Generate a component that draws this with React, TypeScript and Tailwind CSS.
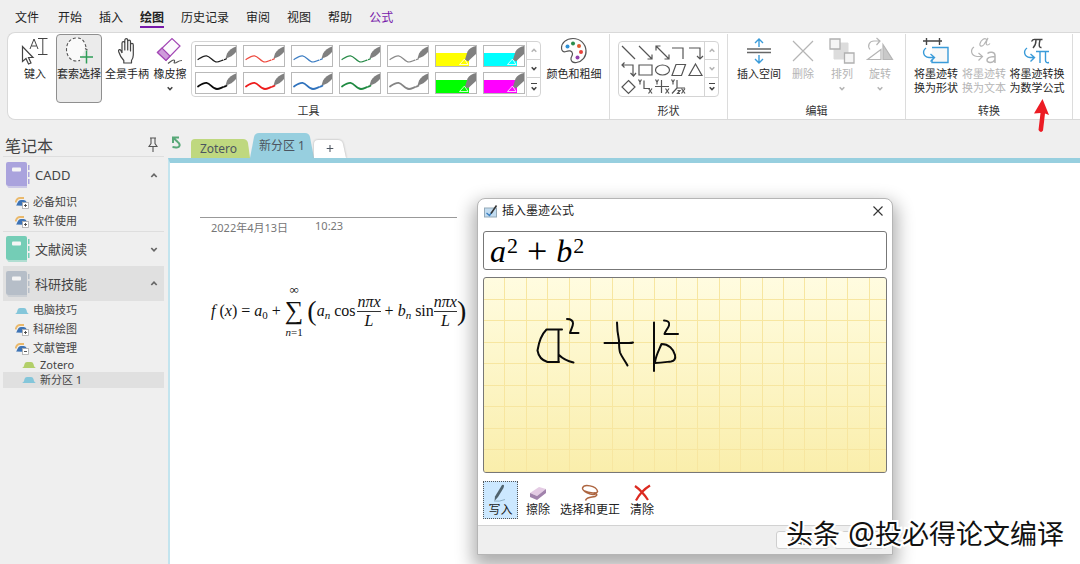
import type { ReactNode } from 'react';
import clsx from 'clsx';

const menuTabs = ['开始', '插入', '绘图', '历史记录', '审阅', '视图', '帮助', '公式'];

const pens = [
  { color: '#1f1f1f', width: 1.2 },
  { color: '#ee4b40', width: 1.2 },
  { color: '#3f7fc4', width: 1.2 },
  { color: '#2a8c4a', width: 1.2 },
  { color: '#8a8a8a', width: 1.2 },
  { color: '#ffff00', marker: true },
  { color: '#00ffff', marker: true },
  { color: '#0a0a0a', width: 1.8 },
  { color: '#ee1c1c', width: 1.8 },
  { color: '#2f72bd', width: 1.8 },
  { color: '#1f8a42', width: 1.8 },
  { color: '#848484', width: 1.8 },
  { color: '#00ff00', marker: true },
  { color: '#ff00ff', marker: true },
];

const shapes: { name: string; art: ReactNode }[] = [
  { name: '直线', art: <path d="M2 2l13 13" /> },
  { name: '箭头', art: <path d="M2 2l13 13M15 10.500v4.500h-4.500" /> },
  { name: '双箭头', art: <path d="M2 2l13 13M15 10.500v4.500h-4.500M2 6.500V2h4.500" /> },
  { name: '肘形', art: <path d="M2 4h11v11" /> },
  { name: '肘形箭头', art: <path d="M2 4h11v11M10 12l3 3 3-3" /> },
  { name: '肘形双箭头', art: <path d="M2 4h11v11M10.500 12l3 3 2.500-3M4.500 1.500L2 4l2.500 2.500" /> },
  { name: '矩形', art: <path d="M2 4h13v10H2z" /> },
  { name: '椭圆', art: <ellipse cx="8.500" cy="9" rx="7" ry="5" /> },
  { name: '平行四边形', art: <path d="M6 3.500h9.500l-4 11H2z" /> },
  { name: '三角形', art: <path d="M8.500 3L15 14.500H2z" /> },
  { name: '菱形', art: <path d="M8.500 2.500L15 9l-6.500 6.500L2 9z" /> },
  { name: '二维象限', art: <Axes d="M7 2.500v8h6" /> },
  { name: '二维坐标', art: <Axes d="M7.500 2v13M1 8.500h14" /> },
  { name: '三维坐标', art: <Axes d="M7 2v8h8M7 10l-5 5.500M7.500 12.500h2.500l-2.500 3H10" /> },
];

function Axes({ d }: { d: string }) {
  return (
    <>
      <path d={d} />
      <path d="M1.500 1.500l1.500 2.500 1.500-2.500M3 4v2.500M11.500 10.500l3.500 5M15 10.500l-3.500 5" />
    </>
  );
}

function Chevron({ up, className = 'text-[#444]', w = 7 }: { up?: boolean; className?: string; w?: number }) {
  return (
    <svg width={w} height="5" viewBox="0 0 7 5" fill="none" stroke="currentColor" strokeWidth="1.700" className={className}>
      <path d={up ? 'M.8 4L3.500 1.200 6.200 4' : 'M.8 1L3.500 3.800 6.200 1'} />
    </svg>
  );
}

function Scroller({ downMuted }: { downMuted?: boolean }) {
  return (
    <div className="grid w-3.5 shrink-0 grid-rows-3 divide-y divide-[#d4d4d4] border-l border-[#d4d4d4]">
      <button aria-label="向上" className="flex items-center justify-center">
        <Chevron up w={6} className="text-[#b5b5b5]" />
      </button>
      <button aria-label="向下" className="flex items-center justify-center">
        <Chevron w={6} className={downMuted ? 'text-[#b5b5b5]' : 'text-[#444]'} />
      </button>
      <button aria-label="更多" className="flex flex-col items-center justify-center gap-0.5">
        <span className="h-px w-1.5 bg-[#444]" />
        <Chevron w={6} />
      </button>
    </div>
  );
}

function PenButton({ color, width, marker }: { color: string; width?: number; marker?: boolean }) {
  return (
    <button aria-label="笔" className="h-[22px] w-[42px] border border-[#b9b9b9] bg-white">
      <svg viewBox="0 0 40 20" className="block h-full w-full">
        {marker ? (
          <>
            <path d="M0 7h33v13H0z" fill={color} />
            <path d="M23.500 18.500l5-5.500 3.500 5.500z" fill={color} stroke="#fff" strokeOpacity=".8" strokeWidth="1" />
            <path d="M29 13.500l2.500-8Q34 1 40 0v8l-5.500 5-2.500 2.500z" fill="#808080" />
          </>
        ) : (
          <>
            <path d="M2 13.500C5 11.500 7.500 9.500 10.500 9.800c4 .4 6 6.200 10.500 6.200 2 0 4-1.200 6-1.900M28.500 13.600l2-.9" fill="none" stroke={color} strokeWidth={width} strokeLinecap="round" />
            <path d="M29.500 12.500l1.500-5Q34 2.500 40 .5V6q-4 5-10.500 6.500z" fill="#808080" />
          </>
        )}
      </svg>
    </button>
  );
}

type ToolProps = {
  icon: ReactNode;
  lines: string[];
  className: string;
  chevron?: boolean;
  disabled?: boolean;
  active?: boolean;
};

function Tool({ icon, lines, className, chevron, disabled, active }: ToolProps) {
  return (
    <button
      disabled={disabled}
      className={clsx(
        'flex flex-col items-center border text-[11px] leading-[14px] whitespace-nowrap',
        active ? 'rounded border-[#8f8f8f] bg-[#ebebeb]' : 'border-transparent',
        disabled ? 'text-[#b5b5b5]' : 'text-[#262626]',
        className
      )}
    >
      <span className="flex h-8 items-center justify-center">{icon}</span>
      {lines.map((line) => (
        <span key={line}>{line}</span>
      ))}
      {chevron && (
        <span className="flex h-3.5 items-center">
          <Chevron w={6} className={disabled ? 'text-[#b5b5b5]' : 'text-[#444]'} />
        </span>
      )}
    </button>
  );
}

function Group({ label, className, children }: { label: string; className: string; children: ReactNode }) {
  return (
    <section className="flex shrink-0 flex-col pt-px">
      <div className={clsx('flex h-[69px] border-r border-[#dcdcdc]', className)}>{children}</div>
      <h2 className="border-r border-[#dcdcdc] text-center text-[11px] leading-4 text-[#333]">{label}</h2>
    </section>
  );
}

const stroke = { fill: 'none', stroke: '#444', strokeWidth: 1.2 };

function TypeIcon() {
  return (
    <svg width="28" height="28" viewBox="0 0 28 28" {...stroke}>
      <path d="M1.500 9.500v15l3.500-3 2.500 5.500 2.500-1-2.500-5.500h4.500z" fill="#fff" />
      <path d="M9 12l4-10 4 10M10.500 9h5M17 1.500h9.500M21.800 1.500v16M17 17.500h9.500" strokeWidth="1" />
    </svg>
  );
}

function LassoIcon() {
  return (
    <svg width="30" height="30" viewBox="0 0 30 30" fill="none">
      <path d="M21 12.500l2.500 1.500M22 11C20.500 5.500 18.500 2 12.500 2 6 2 2.500 7.500 2.500 13.500S6.500 25 12 25c2 0 3-.3 4-.8" fill="#fafafa" stroke="#555" strokeWidth="1.100" strokeDasharray="3 2" />
      <path d="M22.500 14.500v13M16 21h13" stroke="#2f9e58" strokeWidth="1.500" />
    </svg>
  );
}

function HandIcon() {
  return (
    <svg width="20" height="28" viewBox="0 0 20 28" {...stroke}>
      <path d="M5 16V6.200c0-2.200 2.800-2.200 2.800 0V13 3.500c0-2.500 2.900-2.500 2.900 0V13 4.800c0-2.300 2.800-2.300 2.800 0V14 8c0-2.200 2.800-2.200 2.800 0v10c0 2.500-.8 4-1.800 5.500V26H6.800v-2.500C4.500 21 2.500 17.500 1.600 14.500c-.5-2 1.500-2.700 2.300-.9L5 16" fill="#fafafa" strokeLinejoin="round" />
    </svg>
  );
}

function EraserIcon() {
  return (
    <svg width="28" height="28" viewBox="0 0 28 28" fill="none">
      <path d="M1.500 15.500L16 1.500l8 7.500L10 23.500z" fill="#fcfafd" stroke="#a347b5" strokeWidth="1.200" />
      <path d="M1.500 15.500L6 11l8 8-4 4.500z" fill="#cf9bdb" stroke="#a347b5" strokeWidth="1.200" />
      <path d="M12 26.500c3-2.500 6-4.500 6.500-3s-1.500 2.500.5 2.500 3-2.500 7-2.500" stroke="#555" strokeWidth="1.200" />
    </svg>
  );
}

function PaletteIcon() {
  return (
    <svg width="28" height="28" viewBox="0 0 28 28" fill="none">
      <path d="M13 1.500C6 1.500 1.500 6 1.500 11c0 3 2 4.500 4.500 3.500 3-1.200 6-1 6.500 2 .4 2.600-2 3-1.500 6 .5 2.500 3 3.500 5.500 3 6-1 10-6 9.500-12C25.500 6.500 20 1.500 13 1.500z" fill="#fdfdfd" stroke="#555" strokeWidth="1.200" />
      <circle cx="7.500" cy="9.500" r="2" fill="#2b8fd6" />
      <circle cx="13" cy="6.500" r="2" fill="#2a8c4a" />
      <circle cx="19" cy="9" r="2" fill="#e2592b" />
      <circle cx="21" cy="15" r="2" fill="#e8413a" />
      <circle cx="17.500" cy="20.500" r="2" fill="#9141ac" />
    </svg>
  );
}

function InsertSpaceIcon() {
  return (
    <svg width="26" height="28" viewBox="0 0 26 28" fill="none" strokeWidth="1.400">
      <path d="M1 12h24M1 15.500h24" stroke="#666" />
      <path d="M13 10V2M9 6l4-4 4 4M13 18v8M9 22l4 4 4-4" stroke="#3a9bd9" />
    </svg>
  );
}

function ArrangeIcon() {
  return (
    <svg width="26" height="28" viewBox="0 0 26 28" stroke="#b0b0b0" fill="#f5f5f5">
      <path d="M5 6h14v16H5z" fill="#dcdcdc" stroke="#dcdcdc" />
      <path d="M1 2h10v10H1zM15.500 16h9.500v10h-9.500z" strokeWidth="1.300" />
    </svg>
  );
}

function RotateIcon() {
  return (
    <svg width="28" height="28" viewBox="0 0 28 28" stroke="#b5b5b5" fill="none" strokeWidth="1.200">
      <path d="M1.500 22.500L15 12.500v10z" />
      <path d="M17 7.500l9.500 15H17z" fill="#c9c9c9" />
      <path d="M4 12.500C1 8.500 3.500 4 8 4h6M10.500 1L14 4l-3.500 4" />
    </svg>
  );
}

function InkShapeIcon() {
  return (
    <svg width="28" height="28" viewBox="0 0 28 28" fill="none" strokeWidth="1.400">
      <path d="M1 4h19M4.500 1v7M17.500 1v7" stroke="#444" />
      <path d="M10 10.500h16v15H10v-3" stroke="#3a9bd9" fill="#f8f8f8" />
      <path d="M4 11c-4 3-3 9 3 9.500h5M8.500 17l4 3.500-4 4" stroke="#3a9bd9" />
    </svg>
  );
}

function InkTextIcon() {
  return (
    <svg width="28" height="30" viewBox="0 0 28 30" fill="none" stroke="#b5b5b5" strokeWidth="1.200">
      <path d="M4 11c-4 3-3 9 3 9.500h5M8.500 17l4 3.500-4 4" />
      <path d="M17 4c-2-3-6 0-7 3.500-.8 3 2 3.500 4 1L18 2c-2 4-2.500 7-.5 7 1 0 1.800-.6 2.500-1.500" />
      <path d="M17.500 17.500c2-1.800 7.500-2 7.500 2V27M25 20.500c-4 .2-8 .5-8 3.500 0 3.500 6 3.500 8-.5" strokeWidth="1.500" />
    </svg>
  );
}

function InkMathIcon() {
  return (
    <svg width="28" height="28" viewBox="0 0 28 28" fill="none" strokeWidth="1.400">
      <path d="M8.500 4.500Q10 2 12 2.500h7.500M13 3c0 3-1 6-3 8M17 3c-1 4-1.500 8 1.500 7.500" stroke="#444" />
      <path d="M4 11c-4 3-3 9 3 9.500h4M7.500 17l4 3.500-4 4" stroke="#3a9bd9" />
      <path d="M13 14.500h13M17 14.500V26M22.500 14.500v9c0 2 1.500 2.500 3.500 2" stroke="#3a9bd9" />
    </svg>
  );
}

function Ribbon() {
  return (
    <div className="ml-[7px] flex overflow-hidden rounded-l-lg border border-r-0 border-[#d9d9d9] bg-white">
      <Group label="工具" className="pr-1.5 pl-1.5">
        <Tool className="w-[42px]" icon={<TypeIcon />} lines={['键入']} />
        <Tool className="w-[46px]" icon={<LassoIcon />} lines={['套索选择']} active />
        <Tool className="w-[50px]" icon={<HandIcon />} lines={['全景手柄']} />
        <Tool className="w-9" icon={<EraserIcon />} lines={['橡皮擦']} chevron />
        <div className="mt-[7px] ml-[3px] flex h-14 w-[350px] justify-between rounded border border-[#d4d4d4]">
          <div className="grid grid-cols-7 content-center gap-x-1.5 gap-y-[5px] pl-[3px]">
            {pens.map((pen, i) => (
              <PenButton key={i} {...pen} />
            ))}
          </div>
          <Scroller />
        </div>
        <Tool className="ml-1 w-[58px]" icon={<PaletteIcon />} lines={['颜色和粗细']} />
      </Group>
      <Group label="形状" className="px-2">
        <div className="mt-[7px] flex h-14 w-[101px] justify-between rounded border border-[#d4d4d4]">
          <div className="grid grid-cols-5 content-center pl-px">
            {shapes.map(({ name, art }) => (
              <button key={name} aria-label={name} className="h-[17px] w-[17px]">
                <svg viewBox="0 0 17 17" fill="none" stroke="#555" strokeWidth="1.200" className="block h-full w-full">
                  {art}
                </svg>
              </button>
            ))}
          </div>
          <Scroller downMuted />
        </div>
      </Group>
      <Group label="编辑" className="pr-1.5 pl-[7px]">
        <Tool className="w-12" icon={<InsertSpaceIcon />} lines={['插入空间']} />
        <Tool
          className="w-10"
          disabled
          icon={
            <svg width="22" height="22" viewBox="0 0 22 22" stroke="#b5b5b5" strokeWidth="1.200">
              <path d="M1 1l20 20M21 1L1 21" />
            </svg>
          }
          lines={['删除']}
        />
        <Tool className="w-[38px]" disabled icon={<ArrangeIcon />} lines={['排列']} chevron />
        <Tool className="w-[38px]" disabled icon={<RotateIcon />} lines={['旋转']} chevron />
      </Group>
      <Group label="转换" className="px-1.5">
        <Tool className="w-12" icon={<InkShapeIcon />} lines={['将墨迹转', '换为形状']} />
        <Tool className="w-12" disabled icon={<InkTextIcon />} lines={['将墨迹转', '换为文本']} />
        <Tool className="w-[58px]" icon={<InkMathIcon />} lines={['将墨迹转换', '为数学公式']} />
      </Group>
    </div>
  );
}

function Notebook({ name, color, open, className }: { name: string; color: string; open?: boolean; className: string }) {
  return (
    <button className={clsx('flex w-full items-center gap-[5px] pr-1.5 pl-[3px] text-left', className)}>
      <svg width="24" height="26" viewBox="0 0 24 26" fill={color}>
        <path d="M2 0h17a2 2 0 0 1 2 2v22H2.500A2.500 2.500 0 0 1 0 21.500V2a2 2 0 0 1 2-2z" />
        <path d="M1 24.500h20v1H2.500zM22 3h1.500v5H22zM22 10h1.500v5H22zM22 17h1.500v5H22z" />
        <rect x="6" y="5.500" width="9" height="4" rx="1" fill="#f5f5f5" />
      </svg>
      <span className="flex-1 text-[13px] leading-5 text-[#444]">{name}</span>
      <Chevron up={open} w={8} className="text-[#666]" />
    </button>
  );
}

function SectionItem({ name, kind, className }: { name: string; kind: 'plus' | 'minus' | 'blue' | 'green'; className: string }) {
  const group = kind === 'plus' || kind === 'minus';
  return (
    <button className={clsx('flex w-full items-center gap-1 text-left text-[11px] text-[#444]', className)}>
      {group ? (
        <svg width="14" height="12" viewBox="0 0 14 12" fill="none">
          <path d="M.5 5.500C1.500 2 2.500 1 5 1h4" stroke="#eab96c" strokeWidth="1.800" />
          <path d="M1 8.500C2.500 7.500 2.500 3 6 3h2.500c3 0 3 3 5 4v2z" fill="#3d73b5" />
          <rect x="7.500" y="5.500" width="6" height="6" fill="#fff" stroke="#aaa" strokeWidth=".8" />
          <path d={kind === 'plus' ? 'M9 8.500h3M10.500 7v3' : 'M9 8.500h3'} stroke="#444" strokeWidth=".9" />
        </svg>
      ) : (
        <svg width="14" height="6" viewBox="0 0 14 6">
          <path d="M0 6Q2 5.500 2.500 2 3 0 5 0h4q2 0 2.500 2 .5 3.500 2.500 4z" fill={kind === 'blue' ? '#84c6da' : '#b2cf69'} />
        </svg>
      )}
      <span>{name}</span>
    </button>
  );
}

function Sidebar() {
  return (
    <aside className="w-[168px] shrink-0 pr-1 pl-[3px]">
      <div className="flex items-end justify-between border-b border-[#dedede] pt-4 pr-1.5 pl-0.5">
        <h1 className="text-base leading-5 text-[#444]">笔记本</h1>
        <button aria-label="固定" className="pb-1">
          <svg width="10" height="15" viewBox="0 0 10 15" fill="none" stroke="#555" strokeWidth="1.100">
            <path d="M2 1h6M3 1v5.500L1 9.500h8L7 6.500V1M5 9.500V15" />
          </svg>
        </button>
      </div>
      <Notebook name="CADD" color="#aaa3dd" open className="h-9" />
      <SectionItem name="必备知识" kind="plus" className="h-[19px] pl-3" />
      <SectionItem name="软件使用" kind="plus" className="h-[19px] pl-3" />
      <div className="border-t border-[#dedede]">
        <Notebook name="文献阅读" color="#74cdb6" className="h-[34px]" />
      </div>
      <Notebook name="科研技能" color="#b6bec8" open className="h-[35px] bg-[#e0e0e0]" />
      <SectionItem name="电脑技巧" kind="blue" className="h-[19px] pl-3" />
      <SectionItem name="科研绘图" kind="plus" className="h-[19px] pl-3" />
      <SectionItem name="文献管理" kind="minus" className="h-[19px] pl-3" />
      <SectionItem name="Zotero" kind="green" className="h-3.5 pl-[19px]" />
      <SectionItem name="新分区 1" kind="blue" className="h-4 bg-[#e0e0e0] pl-[19px]" />
    </aside>
  );
}

function Fraction() {
  return (
    <span className="flex flex-col items-center text-base leading-[18px] italic">
      <span className="border-b border-[#333]">nπx</span>
      <span>L</span>
    </span>
  );
}

function FourierSeries() {
  return (
    <div className="flex items-center gap-1 text-base leading-5 whitespace-nowrap text-[#111] font-['Liberation_Serif',serif]">
      <span><i>f</i> (<i>x</i>)</span>
      <span>=</span>
      <span><i>a</i><sub className="text-[11px]">0</sub></span>
      <span>+</span>
      <span className="flex flex-col items-center text-[11px] leading-3">
        <span className="text-[13px]">∞</span>
        <span className="text-[26px] leading-[30px]">∑</span>
        <span><i>n</i>=1</span>
      </span>
      <span className="flex items-center">
        <span className="text-[28px] leading-9">(</span>
        <span><i>a</i><sub className="text-[11px] italic">n</sub></span>
      </span>
      <span className="flex items-center gap-0.5">cos<Fraction /></span>
      <span>+</span>
      <span><i>b</i><sub className="text-[11px] italic">n</sub></span>
      <span className="flex items-center">
        sin<Fraction />
        <span className="text-[28px] leading-9">)</span>
      </span>
    </div>
  );
}

function Page() {
  return (
    <main className="flex min-w-0 flex-1 flex-col">
      <div className="flex h-[38px] items-end overflow-hidden text-xs text-[#4c5560]">
        <button aria-label="返回" className="mr-2 mb-2 ml-[3px]">
          <svg width="12" height="15" viewBox="0 0 12 15" fill="none" stroke="#58a878" strokeWidth="2">
            <path d="M3 3.500l3.500 3.200C10 9.500 9 13 5 12.500L1.500 12M2 8V2.500h6" />
          </svg>
        </button>
        <button className="h-[19px] w-[59px] bg-[#bfd87f] pr-1 [clip-path:path('M0_19V4Q0_0_4_0H52Q56_0_57_4L59_19Z')]">Zotero</button>
        <button className="h-[25px] w-16 bg-[#97cfdf] [clip-path:path('M0_25L4_4Q5_0_9_0H55Q59_0_60_4L64_25Z')]">新分区 1</button>
        <span className="[filter:drop-shadow(0_0_1px_#aaa)]">
          <button aria-label="新建分区" className="block h-[18px] w-8 bg-white text-sm leading-[18px] [clip-path:path('M0_18V4Q0_0_4_0H24Q28_0_29_4L32_18Z')]">
            +
          </button>
        </span>
      </div>
      <div className="flex-1 border-t-[5px] border-l-2 border-t-[#97cfdf] border-l-[#c3e4ee] bg-white pt-[54px]">
        <div className="ml-[30px] flex w-[257px] gap-[27px] border-t border-[#999] pl-[11px] text-[11px] text-[#767676]">
          <span className="pt-0.5 leading-4">2022年4月13日</span>
          <span className="leading-4">10:23</span>
        </div>
        <div className="pt-12 pl-[41px]">
          <FourierSeries />
        </div>
      </div>
    </main>
  );
}

const gridColumns = Array.from({ length: 18 }, (_, i) => Math.round((i + 1) * 21.43));
const gridRows = Array.from({ length: 9 }, (_, i) => Math.round((i + 1) * 21.5) - 1);

function InkCanvas() {
  return (
    <div className="mt-[7px] h-[196px] overflow-hidden rounded-[3px] border border-[#777] bg-linear-to-b from-[#fffce0] to-[#faeeab]">
      <svg viewBox="0 0 402 194" className="block h-full w-full" fill="none">
        <g stroke="#f7e6a0" strokeWidth="1">
          {gridColumns.map((x) => (
            <path key={x} d={`M${x - 0.5} 0v194`} />
          ))}
          {gridRows.map((y) => (
            <path key={y} d={`M0 ${y + 0.5}h402`} />
          ))}
        </g>
        <g stroke="#0a0a0a" strokeWidth="2" strokeLinecap="round" strokeLinejoin="round">
          <path d="M78 51.500H62.500C57 57 55 63 53.500 72.500c1 6 5 10 10 11.500H75M74.500 53L74.500 84M75 77c4 4 8 6 14.500 7.500" />
          <path d="M83 41c4 0 6 2 6 4.500S87 51 86 55h8.500" />
          <path d="M133 44.500c0 8 1 13 2 18 0 5 0 8 1 12 2 5 5 8 7.500 13M120.500 65H145c2 0 3 0 4-.5" />
          <path d="M170 44.500V93M171 84c1-7 4-12 6.500-18 7 0 12 5 13.500 11 1 4-1 6-4 6.500-5 .5-9 1-16 1.500" />
          <path d="M180 42.500c4 0 6 2 5 5s-4 6-4.500 8.500H194" />
        </g>
      </svg>
    </div>
  );
}

const inkTools = [
  {
    name: '写入',
    className: 'w-[35px] border-dotted border-[#555] bg-[#cce8ff]',
    icon: <path d="M10 1q3-1 1.500 3L6 13l-3.500 4L3 12.500z" fill="#50636e" />,
    extra: <path d="M2 17q5 1 11-1.500" fill="none" stroke="#8fb0c5" />,
  },
  {
    name: '擦除',
    className: 'w-10 border-transparent',
    icon: <path d="M1 9l9-6 7 2-9 7z" fill="#e4cbe4" />,
    extra: <path d="M1 9v4l7 3v-4zM8 12v4l9-7V5z" fill="#a182ac" />,
  },
  {
    name: '选择和更正',
    className: 'w-16 border-transparent',
    icon: <path d="M14.500 10C10 12 1 7 1.500 4 3-.5 15 2 16.500 7c1 3-9 2-13 0" fill="none" stroke="#ad6540" strokeWidth="1.400" />,
    extra: <path d="M13 9c3 .5 4 2 1 3.500-3 1-8 0-9.500 4" fill="none" stroke="#ad6540" strokeWidth="1.600" />,
  },
  {
    name: '清除',
    className: 'w-10 border-transparent',
    icon: <path d="M2 2q7 5 13 14M17 1.500Q8 7 3 16.500" fill="none" stroke="#dc2a20" strokeWidth="2.200" />,
    extra: null,
  },
];

function InkEquationDialog() {
  return (
    <div
      role="dialog"
      aria-labelledby="ink-title"
      className="absolute top-[198px] left-[477px] w-[416px] rounded-t-lg border border-[#b5b5b5] bg-white shadow-[0_8px_18px_4px_rgba(0,0,0,0.32)]"
    >
      <div className="flex h-6 items-center gap-1 pr-[9px] pl-1.5 text-xs text-[#222]">
        <svg width="14" height="13" viewBox="0 0 14 13">
          <rect x=".5" y="3" width="12" height="9" fill="#c2dcf0" stroke="#94a9b8" />
          <path d="M2.500 8l3 2.500L8 7" fill="none" stroke="#3a7fc0" strokeWidth="1.300" />
          <path d="M7 8.500L12.500.5" stroke="#333" strokeWidth="1.500" />
        </svg>
        <span id="ink-title" className="flex-1">插入墨迹公式</span>
        <button aria-label="关闭">
          <svg width="10" height="10" viewBox="0 0 10 10" stroke="#333" strokeWidth="1.100">
            <path d="M.5.5l9 9M9.500.5l-9 9" />
          </svg>
        </button>
      </div>
      <div className="px-[5px] pt-2 pb-1.5">
        <div className="flex h-[39px] items-center gap-px rounded-[3px] border border-[#777] px-1.5 text-[32px] leading-9 text-black font-['Liberation_Serif',serif]">
          <i>a</i>
          <span className="self-start text-[22px] leading-7">2</span>
          <span className="mx-2 text-[36px]">+</span>
          <i>b</i>
          <span className="self-start text-[22px] leading-7">2</span>
        </div>
        <InkCanvas />
        <div className="mt-2 flex text-xs leading-4 text-[#222]">
          {inkTools.map(({ name, className, icon, extra }) => (
            <button key={name} className={clsx('flex h-[38px] flex-col items-center justify-end border whitespace-nowrap', className)}>
              <svg width="18" height="18" viewBox="0 0 18 18">
                {icon}
                {extra}
              </svg>
              <span>{name}</span>
            </button>
          ))}
        </div>
      </div>
      <div className="flex h-[29px] items-start justify-end gap-[5px] border-t border-[#d2d2d2] bg-[#efefef] pt-[5px] pr-[5px] text-xs">
        <button className="w-[53px] rounded-[3px] border border-[#cfcfcf] bg-[#fbfbfb] leading-4">插入</button>
        <button className="w-[53px] rounded-[3px] border border-[#cfcfcf] bg-[#fbfbfb] leading-4">取消</button>
      </div>
    </div>
  );
}

function App() {
  return (
    <div className="relative flex min-h-screen flex-col overflow-hidden bg-[#efefef] text-[#222] font-['Noto_Sans','Noto_Sans_CJK_SC',sans-serif]">
      <nav className="flex h-8 items-start gap-[17px] pt-[9px] pl-[15px] text-xs leading-[17px]">
        <button className="mr-0.5">文件</button>
        {menuTabs.map((tab) => (
          <button
            key={tab}
            className={clsx(
              tab === '绘图' && 'border-b-2 border-[#7719aa] font-bold',
              tab === '公式' && 'text-[#7719aa]'
            )}
          >
            {tab}
          </button>
        ))}
      </nav>
      <Ribbon />
      <div className="flex flex-1">
        <Sidebar />
        <Page />
      </div>
      <InkEquationDialog />
      <svg width="18" height="36" viewBox="0 0 18 36" className="absolute top-[98px] left-[1032px]">
        <path d="M10.500 1L17 17l-4-1.500-2 17q-2 3-4.500-.5l2-17-6.500.5z" fill="#ec1c24" />
      </svg>
      <p className="absolute right-4 bottom-3 flex items-center gap-2 text-[27px] leading-9 whitespace-nowrap text-[#111] [-webkit-text-stroke:4px_white] [paint-order:stroke_fill]">
        <span>头条</span>
        <span>
          <span className="text-[30px]">@</span>投必得论文编译
        </span>
      </p>
    </div>
  );
}

export default App;
